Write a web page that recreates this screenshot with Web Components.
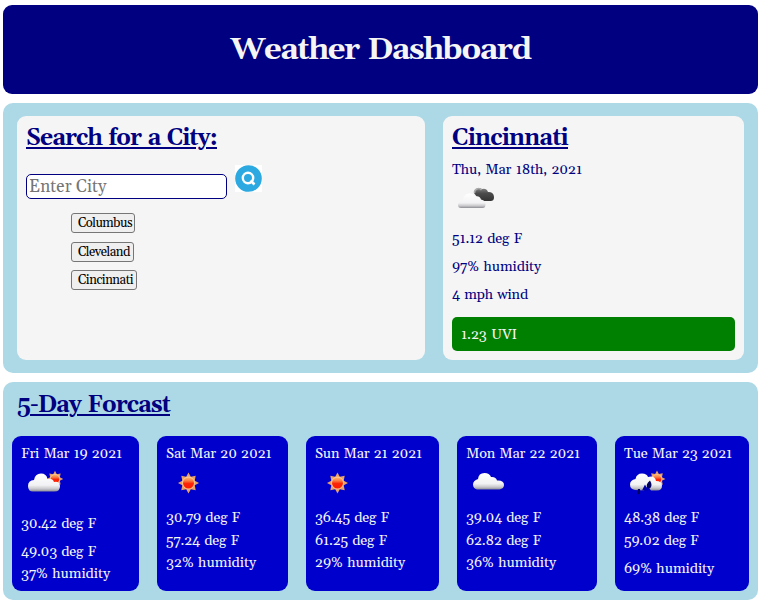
<!DOCTYPE html>
<html lang="en"><head><meta charset="utf-8"><title>Weather Dashboard</title>
<style>
body{margin:0;background:#fff;font-family:Georgia,Gelasio,"Liberation Serif",serif;color:navy}
</style></head><body>
<weather-dashboard></weather-dashboard>
<script>
const define=(name,html,init)=>customElements.define(name,class extends HTMLElement{
  constructor(){super();this.attachShadow({mode:'open'}).innerHTML=html}
  connectedCallback(){if(init)init(this)}
});

/* A line of text whose tracking is set so that it spans the width "w". */
define('fit-text','<style>:host{display:block;white-space:nowrap}span{display:inline-block;word-spacing:.07em}</style><span></span>',el=>{
  const s=el.shadowRoot.querySelector('span'),t=el.getAttribute('text');
  s.textContent=t;
  const w=+el.getAttribute('w');
  if(w)s.style.letterSpacing=(w-s.getBoundingClientRect().width)/t.length+'px';
  s.style.textDecoration=el.hasAttribute('underline')?'underline 2px':'none';
  s.style.textUnderlineOffset='2px';
});

const defs=`<defs>
<linearGradient id="c" x1="0" y1="0" x2="0" y2="1"><stop offset="0" stop-color="#fff"/><stop offset=".65" stop-color="#f2f2f4"/><stop offset=".85" stop-color="#c9c9cd"/><stop offset="1" stop-color="#8c8c94"/></linearGradient>
<linearGradient id="d" x1="0" y1="0" x2="0" y2="1"><stop offset="0" stop-color="#888"/><stop offset=".4" stop-color="#4c4c4c"/><stop offset="1" stop-color="#333"/></linearGradient>
<linearGradient id="s" x1="0" y1="0" x2="0" y2="1"><stop offset="0" stop-color="#fcb36c"/><stop offset=".3" stop-color="#fa7c40"/><stop offset=".55" stop-color="#fb2408"/><stop offset="1" stop-color="#ff1a00"/></linearGradient></defs>`;
const star='<path fill="#e9a068" d="M0-10.5 2.3-6.2 7.2-7.2 6.2-2.3 10.5 0 6.2 2.3 7.2 7.2 2.3 6.2 0 10.5-2.3 6.2-7.2 7.2-6.2 2.3-10.5 0-6.2-2.3-7.2-7.2-2.3-6.2Z"/><circle r="6.4" fill="#fdc890"/><circle r="5.5" fill="url(#s)"/>';
const icons={
 night:`<path fill="url(#d)" d="M22 9a5 5 0 0 1 8-4 5 5 0 0 1 6 3 5 5 0 0 1 6 5c0 3-1 4-4 4H28Z"/><path d="M22.500 9a4 4 0 0 1 7-3" fill="none" stroke="#aaa" stroke-width="1.6"/><path fill="url(#c)" d="M9 24q-3 0-3-3t5-5q1-7 7-6.500 4 .5 5.500 3 4-1 5.500 3 5 1 4.500 5 0 3.500-3 3.500Z"/>`,
 partly:`<g transform="translate(34 11) scale(.78)">${star}</g><path fill="url(#c)" d="M12 23.500q-5 0-5-5.500t6-6q1-6.500 7-6.500 5.500 0 6.500 5.500 5-1 6.500 3 5.500-1 6 4 0 5.500-5.500 5.500Z"/>`,
 sun:`<g transform="translate(22.5 15)">${star}</g>`,
 cloud:`<path fill="url(#c)" d="M11 21.500q-4-1-4-5t5-5.500q.5-6 6.500-6 5 0 6.500 4 5-.5 6 3.500 7-.5 7 4.500 0 3.500-4.500 4.500Z"/>`,
 rain:`<g transform="translate(33 11) scale(.8)">${star}</g><path fill="url(#c)" d="M11 22q-5-1-5-5.500t5.500-5.500q1-5.500 6.500-5.500 5 0 6 3.500 7-2 8 4 6 0 6 4.500 0 5-5 5h-6l-3.500-4.500-3.500 4.500Z"/><path fill="#00005f" d="M14 21l-1 4q2 2.500 3 0l0-4ZM26 12.500q-5 4-2.500 7.500 3.500 1.500 4-3 0-2-1.500-4.500Z"/><path fill="#0000a8" d="M18 22.500l3-6 3 6Z"/>`
};
define('weather-icon','<style>:host,svg{display:block}svg{width:46px;height:30px}</style><div></div>',el=>{
  el.shadowRoot.querySelector('div').innerHTML=`<svg viewBox="0 0 46 30">${defs}${icons[el.getAttribute('kind')]}</svg>`;
});

define('page-header',`<style>:host{display:flex;height:89px;box-sizing:border-box;background:navy;border-radius:9px;justify-content:center;color:#f5f5f5;font:bold 31px/91px Georgia,Gelasio,"Liberation Serif",serif}</style><slot></slot>`);
define('tinted-panel',`<style>:host{display:block;box-sizing:border-box;background:lightblue;border-radius:10px}</style><slot></slot>`);
define('inner-panel',`<style>:host{display:block;box-sizing:border-box;background:#f5f5f5;border-radius:9px;padding:8px 9px 9px}</style><slot></slot>`);
define('panel-title',`<style>:host{display:block;font-size:23px;font-weight:bold;line-height:30px;height:26px}</style><slot></slot>`);
define('city-button',`<style>:host{display:block}button{display:block;box-sizing:border-box;width:100%;height:20px;padding:0 0 0 6px;border:1px solid #767676;border-radius:3px;background:#efefef;color:#000;font:13px/19px Georgia,Gelasio,"Liberation Serif",serif;text-align:left}</style><button><slot></slot></button>`);
define('city-search',`<style>
:host{display:block}
.row{display:flex;margin-top:15px;height:34px;gap:8px}
input{align-self:flex-end;box-sizing:border-box;width:201px;height:25px;border:1px solid navy;border-radius:5px;padding:1px 2px 0;background:#fff;font:17px Georgia,Gelasio,"Liberation Serif",serif;letter-spacing:.1px;margin:0}
input::placeholder{color:#757575}
.go{width:27px;height:27px;background:#fff}
.list{display:grid;justify-items:start;margin:14px 0 0 45px;row-gap:8.500px}
</style>
<div class="row"><input placeholder="Enter City">
<svg class="go" viewBox="0 0 27 27"><circle cx="13.500" cy="13.500" r="13.300" fill="#2ba9e0"/><circle cx="13" cy="13" r="5.200" fill="none" stroke="#fff" stroke-width="2.400"/><path d="M15.500 15.500l4 4" stroke="#fff" stroke-width="2.600"/></svg></div>
<div class="list">
<city-button style="width:64px"><fit-text text="Columbus" w="54"></fit-text></city-button>
<city-button style="width:63px"><fit-text text="Cleveland" w="52"></fit-text></city-button>
<city-button style="width:66px"><fit-text text="Cincinnati" w="55"></fit-text></city-button></div>`);
define('current-weather',`<style>
:host{display:block;font-size:14.400px;line-height:28px}
.date{margin-top:6px}.icon{height:41px}
.uvi{margin-top:8px;height:34px;line-height:36px;box-sizing:border-box;padding-left:9px;border-radius:5px;background:green;color:#f5f5f5}
</style>
<fit-text class="date" text="Thu, Mar 18th, 2021" w="130"></fit-text>
<div class="icon"><weather-icon kind="night"></weather-icon></div>
<fit-text text="51.12 deg F" w="70"></fit-text>
<fit-text text="97% humidity" w="89"></fit-text>
<fit-text text="4 mph wind" w="76"></fit-text>
<div class="uvi"><fit-text text="1.23 UVI" w="56"></fit-text></div>`);
define('day-card',`<style>
:host{display:block;height:155px;box-sizing:border-box;padding:7px 9px 0 9px;border-radius:9px;background:mediumblue;color:#f5f5f5;font-size:14.400px;line-height:22px}
.icon{height:41px;padding-top:3px;box-sizing:border-box}
</style><div class="body"></div>`,el=>{
  const d=JSON.parse(el.getAttribute('data'));
  el.shadowRoot.querySelector('.body').innerHTML=`<fit-text text="${d.date[0]}" w="${d.date[1]}"></fit-text><div class="icon"><weather-icon kind="${d.icon}"></weather-icon></div>`+
   d.rows.map(r=>`<fit-text style="margin-top:${r[2]}px" text="${r[0]}" w="${r[1]}"></fit-text>`).join('');
});
const days=[
{date:['Fri Mar 19 2021',101],icon:'partly',rows:[['30.42 deg F',75,7],['49.03 deg F',75,6],['37% humidity',89,0]]},
{date:['Sat Mar 20 2021',105.5],icon:'sun',rows:[['30.79 deg F',74,1],['57.24 deg F',73,1],['32% humidity',90,0]]},
{date:['Sun Mar 21 2021',107],icon:'sun',rows:[['36.45 deg F',74,1],['61.25 deg F',72,1],['29% humidity',90,0]]},
{date:['Mon Mar 22 2021',114],icon:'cloud',rows:[['39.04 deg F',75,1],['62.82 deg F',75,1],['36% humidity',90,0]]},
{date:['Tue Mar 23 2021',108],icon:'rain',rows:[['48.38 deg F',75,1],['59.02 deg F',74.5,1],['69% humidity',90,6]]}];
define('weather-dashboard',`<style>
:host{display:grid;grid-template-rows:89px 270px 218px;row-gap:9px;box-sizing:border-box;width:760px;height:601px;padding:5px 2px 0 3px}
.top{display:grid;grid-template-columns:408px 301px;gap:18px;padding:13px 14px}
.five{padding:9px 9px 0}
.five panel-title{margin-left:5px}
.days{display:grid;grid-template-columns:127px 131px 133px 140px 134px;gap:18px;margin-top:19px}
</style>
<page-header><fit-text text="Weather Dashboard" w="300"></fit-text></page-header>
<tinted-panel class="top"><inner-panel><panel-title><fit-text underline text="Search for a City:" w="191"></fit-text></panel-title><city-search></city-search></inner-panel>
<inner-panel><panel-title><fit-text underline text="Cincinnati" w="116"></fit-text></panel-title><current-weather></current-weather></inner-panel></tinted-panel>
<tinted-panel class="five"><panel-title><fit-text underline text="5-Day Forcast" w="153"></fit-text></panel-title>
<div class="days">${days.map(d=>`<day-card data='${JSON.stringify(d)}'></day-card>`).join('')}</div></tinted-panel>`);
</script></body></html>
